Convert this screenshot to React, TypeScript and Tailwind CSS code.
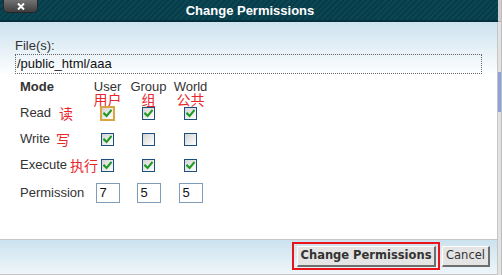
import React from "react";

const Check = () => (
  <svg width="9" height="9" viewBox="0 0 9 9">
    <path d="M1.2 4.6 L3.6 7 L7.9 1.8" stroke="#1f9a24" strokeWidth="2.1" fill="none" strokeLinecap="square" />
  </svg>
);

function Box({ checked, focus }: { checked: boolean; focus?: boolean }) {
  if (focus) {
    return (
      <div className="w-[15px] h-[15px] border-2 border-[#dba640] bg-[linear-gradient(135deg,#d4d4d4,#ffffff)] flex items-center justify-center">
        {checked && <Check />}
      </div>
    );
  }
  return (
    <div className="w-[13px] h-[13px] border border-[#1d4f7e] bg-[linear-gradient(135deg,#d4d4d4,#ffffff)] flex items-center justify-center">
      {checked && <Check />}
    </div>
  );
}

function Row({
  label,
  zh,
  zhClass,
  boxes,
}: {
  label: string;
  zh: string;
  zhClass: string;
  boxes: [boolean, boolean, boolean];
}) {
  return (
    <>
      <div className="h-[26px] flex items-center whitespace-nowrap">
        <span>{label}</span>
        <span className={"text-[#e8262c] font-['Noto_Sans_CJK_SC',sans-serif] text-[14px] leading-[14px] " + zhClass}>{zh}</span>
      </div>
      <div className="h-[26px] flex items-center justify-center">
        <Box checked={boxes[0]} focus={label === "Read"} />
      </div>
      <div className="h-[26px] flex items-center justify-center">
        <Box checked={boxes[1]} />
      </div>
      <div className="h-[26px] flex items-center justify-center">
        <Box checked={boxes[2]} />
      </div>
    </>
  );
}

export default function App() {
  return (
    <div className="w-[502px] h-[275px] flex bg-white overflow-hidden font-['Liberation_Sans',Arial,sans-serif] text-[13px] text-[#333]">
      <div className="w-[498px] h-[275px] flex flex-col">
        {/* header */}
        <div className="relative h-[22px] shrink-0 border-b-2 border-[#04303b] bg-[#0a4250] bg-[repeating-linear-gradient(135deg,#0b4655_0px,#0b4655_2px,#083c49_2px,#083c49_4px)] flex items-center justify-center">
          <div className="absolute left-[3px] top-0 w-[35px] h-[13px] rounded-b-[5px] border border-t-0 border-[#262626] bg-[linear-gradient(#727272,#3e3e3e)] flex items-center justify-center">
            <svg width="8" height="7" viewBox="0 0 8 7">
              <path d="M1 0.5 L7 6.5 M7 0.5 L1 6.5" stroke="#ffffff" strokeWidth="2" />
            </svg>
          </div>
          <span className="text-white font-bold text-[13px] leading-[15px] pl-[2px]">Change Permissions</span>
        </div>
        {/* body */}
        <div className="flex-1 border-r border-[#c6c6c6] bg-[linear-gradient(180deg,#cde2ef_0px,#ffffff_54px)] px-[15px] pt-[16px]">
          <div className="leading-[15px]">File(s):</div>
          <div className="mt-[1px] h-[20px] border border-dotted border-[#666] flex items-center pl-[1px] text-[13px] text-[#111]">
            /public_html/aaa
          </div>
          <div className="ml-[5px] mt-[6px] grid grid-cols-[67px_41px_41px_43px]">
            <div className="h-[14px] leading-[14px] font-bold">Mode</div>
            <div className="h-[14px] leading-[14px] text-center">User</div>
            <div className="h-[14px] leading-[14px] text-center">Group</div>
            <div className="h-[14px] leading-[14px] text-center">World</div>
            <div className="h-[6px]"></div>
            {["用户", "组", "公共"].map((t) => (
              <div key={t} className="h-[6px] flex justify-center items-start overflow-visible">
                <span className="mt-[-2px] text-[#e8262c] font-['Noto_Sans_CJK_SC',sans-serif] text-[14px] leading-[14px] whitespace-nowrap">
                  {t}
                </span>
              </div>
            ))}
            <Row label="Read" zh="读" zhClass="ml-[8px]" boxes={[true, true, true]} />
            <Row label="Write" zh="写" zhClass="ml-[6px]" boxes={[true, false, false]} />
            <Row label="Execute" zh="执行" zhClass="ml-[3px]" boxes={[true, true, true]} />
            <div className="h-[30px] flex items-center">Permission</div>
            {["7", "5", "5"].map((v, i) => (
              <div key={i} className="h-[30px] flex items-center justify-center">
                <div className="w-[24px] h-[20px] border border-[#7f9db9] bg-white pl-[3px] leading-[18px] text-[13px] text-[#111]">
                  {v}
                </div>
              </div>
            ))}
          </div>
        </div>
        {/* footer */}
        <div className="h-[36px] shrink-0 border-t border-b border-r border-[#c6c6c6] bg-[linear-gradient(180deg,#cce2ef,#eef6f9)] flex justify-end items-start pt-[2px] pr-[7px]">
          <div className="border-2 border-[#e8141c] pt-[2px] pb-[1px] pl-[3px] pr-[2px]">
            <div className="w-[139px] h-[21px] bg-[#e4e4e4] border-t border-l border-r-2 border-b-2 border-t-white border-l-white border-r-[#6e6e6e] border-b-[#6e6e6e] flex items-center justify-center font-['DejaVu_Sans',sans-serif] font-bold text-[11.5px] text-[#333] whitespace-nowrap">
              Change Permissions
            </div>
          </div>
          <div className="ml-[2px] mt-[4px] w-[48px] h-[21px] bg-[#e4e4e4] border-t border-l border-r-2 border-b-2 border-t-white border-l-white border-r-[#6e6e6e] border-b-[#6e6e6e] flex items-center justify-center font-['DejaVu_Sans',sans-serif] text-[11.5px] text-[#333]">
            Cancel
          </div>
        </div>
      </div>
      {/* scrollbar strip */}
      <div className="w-[4px] h-[275px] bg-[#e2e2e2] border-r border-[#bdbdbd] flex flex-col">
        <div className="h-[22px] bg-[#cfcfcf] border-b border-[#b0b0b0]"></div>
        <div className="mt-[50px] h-[40px] w-[3px] bg-[#8ea4d8]"></div>
      </div>
    </div>
  );
}
